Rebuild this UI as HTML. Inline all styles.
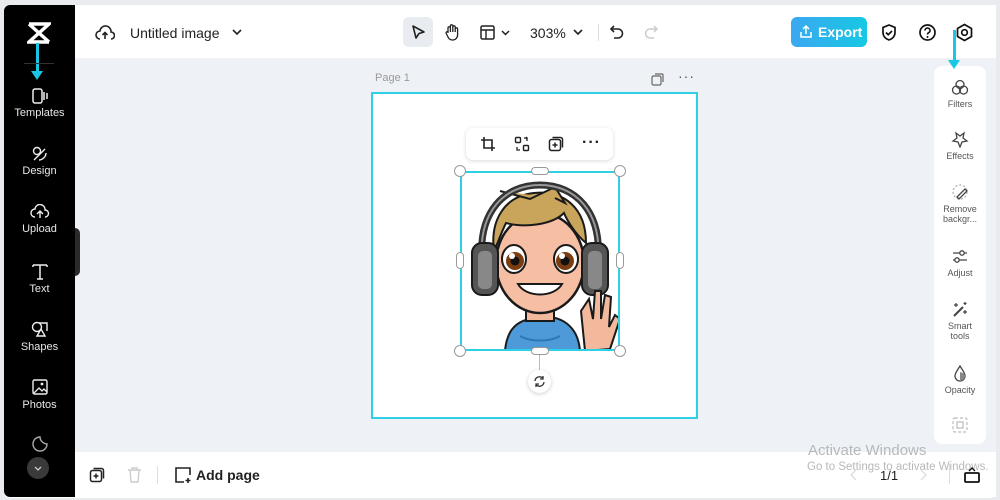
<!DOCTYPE html>
<html><head><meta charset="utf-8"><style>
*{box-sizing:border-box;margin:0;padding:0}
body{width:1000px;height:500px;background:#e9ebee;font-family:"Liberation Sans",sans-serif;position:relative;overflow:hidden}
.app{position:absolute;left:4px;top:5px;width:992px;height:493px;background:#fff;border-radius:6px;overflow:hidden}
.side{position:absolute;left:4px;top:5px;width:71px;height:492px;background:#000;border-radius:6px 0 0 6px;z-index:3}
.si{position:absolute;left:0;width:71px;text-align:center;color:#e8e8e8;font-size:11px}
.si svg{display:block;margin:0 auto 3px}
.top{position:absolute;left:75px;top:5px;right:4px;height:53px;background:#fff}
.canvas{position:absolute;left:75px;top:58px;right:4px;height:394px;background:#eef1f5}
.bottom{position:absolute;left:75px;top:452px;right:4px;height:45px;background:#fff}
.t{position:absolute;font-size:14px;color:#222}
.rp{position:absolute;left:934px;top:66px;width:52px;height:378px;background:#fff;border-radius:8px;z-index:2}
.ri{position:absolute;left:0;width:52px;text-align:center;font-size:9px;color:#555;line-height:10px}
.ri svg{display:block;margin:0 auto 3px}
</style></head><body>
<div class="app"></div>
<div class="side">
 <svg style="position:absolute;left:23px;top:17px" width="24" height="22" viewBox="0 0 24 22"><path d="M2 2h20L2 20h20M2 2l20 18M22 2L2 20" stroke="#fff" stroke-width="3.5" fill="none"/></svg>
 <div style="position:absolute;left:32px;top:38px;width:3px;height:28px;background:#19c6e6"></div>
 <div style="position:absolute;left:27px;top:66px;border-left:6.5px solid transparent;border-right:6.5px solid transparent;border-top:9px solid #19c6e6"></div>
 <div style="position:absolute;left:20px;top:58px;width:30px;height:1px;background:#333"></div>
 <div class="si" style="top:83px"><svg width="18" height="16"><rect x="2" y="1" width="9" height="14" rx="2" fill="none" stroke="#eee" stroke-width="1.5"/><path d="M13 4v8M16 5v6" stroke="#eee" stroke-width="1.5"/></svg>Templates</div>
 <div class="si" style="top:141px"><svg width="18" height="16"><circle cx="6" cy="5" r="3.5" fill="none" stroke="#eee" stroke-width="1.4"/><path d="M3 14l11-11M8 14c3 0 7-3 7-7" stroke="#eee" stroke-width="1.4" fill="none"/></svg>Design</div>
 <div class="si" style="top:199px"><svg width="20" height="16"><path d="M5 13a4 4 0 0 1 0-8a5 5 0 0 1 10 1a3.5 3.5 0 0 1 0 7M10 14V8M7 10l3-3 3 3" stroke="#eee" stroke-width="1.4" fill="none"/></svg>Upload</div>
 <div class="si" style="top:257px"><svg width="18" height="18"><path d="M2 3h14M9 3v14M2 3v2M16 3v2M6 17h6" stroke="#eee" stroke-width="1.5" fill="none"/></svg>Text</div>
 <div class="si" style="top:315px"><svg width="18" height="18"><circle cx="6" cy="7" r="4.5" fill="none" stroke="#eee" stroke-width="1.4"/><path d="M8 3h8v8M6 16l4-7 4 7z" stroke="#eee" stroke-width="1.4" fill="none"/></svg>Shapes</div>
 <div class="si" style="top:373px"><svg width="18" height="18"><rect x="2" y="2" width="14" height="14" rx="1.5" fill="none" stroke="#eee" stroke-width="1.4"/><path d="M3 15l5-5 3 3 2-2 3 3" stroke="#eee" stroke-width="1.3" fill="none"/><circle cx="11" cy="6" r="1.4" fill="#eee"/></svg>Photos</div>
 <div class="si" style="top:430px"><svg width="18" height="18"><path d="M9 2a7 7 0 1 0 7 7c-3 0-7-3-7-7z" fill="none" stroke="#aaa" stroke-width="1.4"/></svg></div>
 <div style="position:absolute;left:23px;top:452px;width:22px;height:22px;border-radius:50%;background:#3a3a3a"><svg width="22" height="22"><path d="M8 10l3 3 3-3" stroke="#ccc" stroke-width="1.3" fill="none"/></svg></div>
</div>
<div style="position:absolute;left:75px;top:228px;width:5px;height:48px;background:#2a2a2a;border-radius:0 6px 6px 0;z-index:3"></div>

<div class="top"></div>
<svg style="position:absolute;left:95px;top:24px" width="20" height="17"><path d="M5 15a4 4 0 0 1 0-8a5.5 5.5 0 0 1 11 1a3.5 3.5 0 0 1 0 7M10 15V9M7.5 11l2.5-2.5 2.5 2.5" stroke="#222" stroke-width="1.6" fill="none"/></svg>
<div class="t" style="left:130px;top:25px;font-size:14px;color:#222">Untitled image</div>
<svg style="position:absolute;left:231px;top:27px" width="12" height="10"><path d="M2 3l4 4 4-4" stroke="#222" stroke-width="1.6" fill="none"/></svg>
<div style="position:absolute;left:403px;top:17px;width:30px;height:30px;background:#e8ebef;border-radius:6px"></div>
<svg style="position:absolute;left:410px;top:24px" width="16" height="16"><path d="M3 2l11 6-5 1.5L6 14z" stroke="#222" stroke-width="1.6" fill="none" stroke-linejoin="round"/></svg>
<svg style="position:absolute;left:444px;top:23px" width="16" height="18"><path d="M4 10V5a1.2 1.2 0 0 1 2.4 0v4V3a1.2 1.2 0 0 1 2.4 0v6V4a1.2 1.2 0 0 1 2.4 0v5V6a1.2 1.2 0 0 1 2.4 0v6a5 5 0 0 1-5 5H8a5 5 0 0 1-4-3L2 10a1.2 1.2 0 0 1 2-1z" stroke="#222" stroke-width="1.3" fill="none"/></svg>
<svg style="position:absolute;left:480px;top:25px" width="34" height="15"><rect x="1" y="1" width="13" height="13" rx="1.5" fill="none" stroke="#222" stroke-width="1.5"/><path d="M1 5h13M6 5v9" stroke="#222" stroke-width="1.4"/><path d="M22 6l3.5 3.5L29 6" stroke="#222" stroke-width="1.5" fill="none"/></svg>
<div class="t" style="left:530px;top:25px;font-size:14px">303%</div>
<svg style="position:absolute;left:572px;top:27px" width="12" height="10"><path d="M2 3l4 4 4-4" stroke="#222" stroke-width="1.6" fill="none"/></svg>
<div style="position:absolute;left:598px;top:24px;width:1px;height:17px;background:#ddd"></div>
<svg style="position:absolute;left:609px;top:24px" width="16" height="16"><path d="M5 2L2 5l3 3M2 5h7a4.5 4.5 0 0 1 0 9H5" stroke="#222" stroke-width="1.6" fill="none"/></svg>
<svg style="position:absolute;left:643px;top:24px" width="16" height="16"><path d="M11 2l3 3-3 3M14 5H7a4.5 4.5 0 0 0 0 9h4" stroke="#ccc" stroke-width="1.5" fill="none"/></svg>
<div style="position:absolute;left:791px;top:17px;width:76px;height:30px;border-radius:6px;background:linear-gradient(90deg,#3aa8f0,#16c8e4);color:#fff;font-weight:bold;font-size:14px;line-height:30px;padding-left:27px">Export</div>
<svg style="position:absolute;left:799px;top:24px" width="14" height="15"><path d="M7 10V2M4 5l3-3 3 3M2 8v5h10V8" stroke="#fff" stroke-width="1.5" fill="none"/></svg>
<svg style="position:absolute;left:880px;top:23px" width="18" height="19"><path d="M9 2l6 2.5v5c0 4-3 6.5-6 7.5-3-1-6-3.5-6-7.5v-5z" stroke="#111" stroke-width="1.7" fill="none"/><path d="M6 9.5l2.2 2.2L12 8" stroke="#111" stroke-width="1.7" fill="none"/></svg>
<svg style="position:absolute;left:918px;top:23px" width="19" height="19"><circle cx="9.5" cy="9.5" r="7.5" stroke="#111" stroke-width="1.7" fill="none"/><path d="M7 7.5a2.5 2.5 0 1 1 3.5 2.3c-.8.4-1 .9-1 1.7" stroke="#111" stroke-width="1.6" fill="none"/><circle cx="9.5" cy="14" r="1" fill="#111"/></svg>
<svg style="position:absolute;left:955px;top:23px" width="19" height="19"><path d="M9.5 1.5l7 4v8l-7 4-7-4v-8z" stroke="#111" stroke-width="1.7" fill="none"/><circle cx="9.5" cy="9.5" r="2.8" stroke="#111" stroke-width="1.7" fill="none"/></svg>
<div style="position:absolute;left:953px;top:30px;width:3px;height:30px;background:#19c6e6;z-index:4"></div>
<div style="position:absolute;left:948px;top:60px;border-left:6.5px solid transparent;border-right:6.5px solid transparent;border-top:9px solid #19c6e6;z-index:4"></div>

<div class="canvas"></div>
<div class="t" style="left:375px;top:72px;font-size:11px;color:#999">Page 1</div>
<svg style="position:absolute;left:651px;top:73px" width="13" height="13"><rect x="1" y="3" width="9" height="9" rx="1.5" stroke="#666" stroke-width="1.2" fill="none"/><path d="M4 1h7a1 1 0 0 1 1 1v7" stroke="#666" stroke-width="1.2" fill="none"/></svg>
<div class="t" style="left:678px;top:68px;font-size:14px;color:#555;letter-spacing:1px">···</div>
<div style="position:absolute;left:371px;top:92px;width:327px;height:327px;background:#fff;border:2px solid #2fd0e3"></div>
<div style="position:absolute;left:466px;top:128px;width:147px;height:32px;background:#fff;border-radius:7px;box-shadow:0 1px 4px rgba(0,0,0,.15)"></div>
<svg style="position:absolute;left:480px;top:136px" width="16" height="16"><path d="M4 1v11h11M1 4h11v11" stroke="#222" stroke-width="1.6" fill="none"/></svg>
<svg style="position:absolute;left:514px;top:136px" width="16" height="16"><rect x="1.5" y="1.5" width="5" height="5" rx="1" stroke="#222" stroke-width="1.4" fill="none"/><rect x="9.5" y="9.5" width="5" height="5" rx="1" stroke="#222" stroke-width="1.4" fill="none"/><path d="M10 2h3v3M12 1l1 1-1 1M6 14H3v-3" stroke="#222" stroke-width="1.3" fill="none"/></svg>
<svg style="position:absolute;left:548px;top:136px" width="16" height="16"><rect x="1.5" y="3.5" width="11" height="11" rx="2" stroke="#222" stroke-width="1.5" fill="none"/><path d="M4.5 1.5h8a2 2 0 0 1 2 2v8M7 6.5v5M4.5 9h5" stroke="#222" stroke-width="1.5" fill="none"/></svg>
<div class="t" style="left:582px;top:134px;font-size:16px;font-weight:bold;letter-spacing:1px">···</div>

<svg style="position:absolute;left:460px;top:171px" width="160" height="180" viewBox="0 0 160 180">
 <path d="M45 180c2-25 15-32 35-34s38 8 40 34z" fill="#4e9ad8" stroke="#1a1a1a" stroke-width="2"/>
 <path d="M60 165c10 6 30 6 40 0" stroke="#2f76b5" stroke-width="2" fill="none"/>
 <rect x="66" y="125" width="28" height="25" fill="#f2b99d" stroke="#1a1a1a" stroke-width="2"/>
 <ellipse cx="80" cy="92" rx="44" ry="50" fill="#f6bfa4" stroke="#1a1a1a" stroke-width="2.5"/>
 <path d="M34 80c-4-30 10-55 40-58 30-3 52 15 52 50-12-10-20-25-22-30-12 12-40 15-58 10-5 10-8 20-12 28z" fill="#c9a55b" stroke="#1a1a1a" stroke-width="2"/>
 <path d="M40 20l30 8 25-12 10 16-10-5" fill="#c9a55b" stroke="#1a1a1a" stroke-width="2"/>
 <path d="M22 90C18 40 45 14 80 14s62 26 58 76" stroke="#333" stroke-width="7" fill="none"/>
 <path d="M22 90C18 40 45 14 80 14s62 26 58 76" stroke="#999" stroke-width="2" fill="none"/>
 <rect x="12" y="72" width="26" height="52" rx="10" fill="#555" stroke="#1a1a1a" stroke-width="2"/>
 <rect x="18" y="80" width="14" height="38" rx="5" fill="#888"/>
 <rect x="122" y="72" width="26" height="52" rx="10" fill="#555" stroke="#1a1a1a" stroke-width="2"/>
 <rect x="128" y="80" width="14" height="38" rx="5" fill="#888"/>
 <ellipse cx="54" cy="88" rx="12" ry="14" fill="#fff" stroke="#1a1a1a" stroke-width="2"/>
 <ellipse cx="106" cy="88" rx="12" ry="14" fill="#fff" stroke="#1a1a1a" stroke-width="2"/>
 <circle cx="55" cy="90" r="9" fill="#7a3d12"/><circle cx="105" cy="90" r="9" fill="#7a3d12"/>
 <circle cx="55" cy="90" r="4.5" fill="#111"/><circle cx="105" cy="90" r="4.5" fill="#111"/>
 <circle cx="52" cy="85" r="3" fill="#fff"/><circle cx="102" cy="85" r="3" fill="#fff"/>
 <path d="M58 113c8 14 36 14 44 0z" fill="#fff" stroke="#1a1a1a" stroke-width="2"/>
 <path d="M125 180l-4-40 8-12 4 20 2-28 6 0 0 28 4-24 6 2-2 30 6-12 5 4-10 30z" fill="#f2b99d" stroke="#1a1a1a" stroke-width="2"/>
</svg>
<div style="position:absolute;left:460px;top:171px;width:160px;height:180px;border:2px solid #2fd0e3"></div>
<div style="position:absolute;left:539px;top:355px;width:1px;height:15px;background:#bbb"></div>
<div style="position:absolute;left:454px;top:165px;width:12px;height:12px;border-radius:50%;background:#fff;border:1px solid #999"></div>
<div style="position:absolute;left:614px;top:165px;width:12px;height:12px;border-radius:50%;background:#fff;border:1px solid #999"></div>
<div style="position:absolute;left:454px;top:345px;width:12px;height:12px;border-radius:50%;background:#fff;border:1px solid #999"></div>
<div style="position:absolute;left:614px;top:345px;width:12px;height:12px;border-radius:50%;background:#fff;border:1px solid #999"></div>
<div style="position:absolute;left:531px;top:167px;width:18px;height:8px;border-radius:4px;background:#fff;border:1px solid #999"></div>
<div style="position:absolute;left:531px;top:347px;width:18px;height:8px;border-radius:4px;background:#fff;border:1px solid #999"></div>
<div style="position:absolute;left:456px;top:252px;width:8px;height:17px;border-radius:4px;background:#fff;border:1px solid #999"></div>
<div style="position:absolute;left:616px;top:252px;width:8px;height:17px;border-radius:4px;background:#fff;border:1px solid #999"></div>
<div style="position:absolute;left:528px;top:370px;width:23px;height:23px;border-radius:50%;background:#fff;box-shadow:0 1px 4px rgba(0,0,0,.2)"></div>
<svg style="position:absolute;left:533px;top:375px" width="13" height="13"><path d="M2 6a4.5 4.5 0 0 1 8-2.5M11 7a4.5 4.5 0 0 1-8 2.5M10 1v3H7M3 12V9h3" stroke="#333" stroke-width="1.3" fill="none"/></svg>

<div class="rp">
 <div class="ri" style="top:13px"><svg width="18" height="17"><circle cx="9" cy="5.5" r="4" stroke="#444" stroke-width="1.3" fill="none"/><circle cx="5.5" cy="11" r="4" stroke="#444" stroke-width="1.3" fill="none"/><circle cx="12.5" cy="11" r="4" stroke="#444" stroke-width="1.3" fill="none"/></svg>Filters</div>
 <div class="ri" style="top:65px"><svg width="18" height="17"><path d="M5 2l4 3 4-3-1 5 4 3-5 1-2 5-2-5-5-1 4-3z" stroke="#444" stroke-width="1.3" fill="none"/></svg>Effects</div>
 <div class="ri" style="top:118px"><svg width="18" height="17"><circle cx="9" cy="8" r="7" stroke="#aaa" stroke-width="1.2" stroke-dasharray="2 2" fill="none"/><path d="M6 13l8-8 2 2-8 8z" stroke="#444" stroke-width="1.3" fill="none"/></svg>Remove<br>backgr...</div>
 <div class="ri" style="top:182px"><svg width="18" height="17"><path d="M2 5h14M2 12h14" stroke="#444" stroke-width="1.3"/><circle cx="11" cy="5" r="2.2" fill="#fff" stroke="#444" stroke-width="1.3"/><circle cx="6" cy="12" r="2.2" fill="#fff" stroke="#444" stroke-width="1.3"/></svg>Adjust</div>
 <div class="ri" style="top:235px"><svg width="18" height="17"><path d="M3 15L12 6" stroke="#444" stroke-width="2"/><path d="M5 2v4M3 4h4M14 9v4M12 11h4M14 1v3M12.5 2.5h3" stroke="#444" stroke-width="1.2"/></svg>Smart<br>tools</div>
 <div class="ri" style="top:299px"><svg width="18" height="17"><path d="M9 1C6 6 4 8 4 11a5 5 0 0 0 10 0c0-3-2-5-5-10z" stroke="#444" stroke-width="1.3" fill="none"/><path d="M9 7v9a5 5 0 0 0 5-5c0-2-2-3-5-4z" fill="#888"/></svg>Opacity</div>
 <div class="ri" style="top:350px"><svg width="18" height="17"><rect x="2" y="2" width="14" height="14" rx="2" stroke="#bbb" stroke-width="1.2" stroke-dasharray="3 2" fill="none"/><rect x="6" y="6" width="6" height="6" stroke="#bbb" stroke-width="1.2" fill="none"/></svg></div>
</div>

<div class="bottom"></div>
<svg style="position:absolute;left:89px;top:467px" width="16" height="16"><rect x="1.5" y="3.5" width="11" height="11" rx="2" stroke="#222" stroke-width="1.5" fill="none"/><path d="M4.5 1.5h8a2 2 0 0 1 2 2v8M7 6.5v5M4.5 9h5" stroke="#222" stroke-width="1.5" fill="none"/></svg>
<svg style="position:absolute;left:127px;top:467px" width="15" height="16"><path d="M1 3h13M5 3V1h5v2M3 3l1 12h7l1-12" stroke="#ccc" stroke-width="1.4" fill="none"/></svg>
<div style="position:absolute;left:157px;top:466px;width:1px;height:18px;background:#ddd"></div>
<svg style="position:absolute;left:174px;top:466px" width="18" height="18"><path d="M16 9V2H2v14h8M14 12v5M11.5 14.5h5" stroke="#222" stroke-width="1.6" fill="none"/></svg>
<div class="t" style="left:196px;top:467px;font-size:14px;font-weight:bold;color:#222">Add page</div>
<div class="t" style="left:808px;top:442px;font-size:15px;color:#b8b8b8">Activate Windows</div>
<div class="t" style="left:807px;top:461px;font-size:11.5px;color:#b8b8b8">Go to Settings to activate Windows.</div>
<div class="t" style="left:880px;top:468px;font-size:13px;color:#222">1/1</div>
<svg style="position:absolute;left:849px;top:468px" width="10" height="14"><path d="M7 2L2 7l5 5" stroke="#ddd" stroke-width="1.3" fill="none"/></svg>
<svg style="position:absolute;left:918px;top:468px" width="10" height="14"><path d="M3 2l5 5-5 5" stroke="#ddd" stroke-width="1.3" fill="none"/></svg>
<div style="position:absolute;left:949px;top:464px;width:1px;height:20px;background:#ddd"></div>
<svg style="position:absolute;left:963px;top:467px" width="18" height="16"><rect x="2" y="6" width="14" height="9" rx="1" stroke="#111" stroke-width="1.8" fill="none"/><path d="M6 4l3-3 3 3" stroke="#111" stroke-width="1.4" fill="none"/></svg>
</body></html>
